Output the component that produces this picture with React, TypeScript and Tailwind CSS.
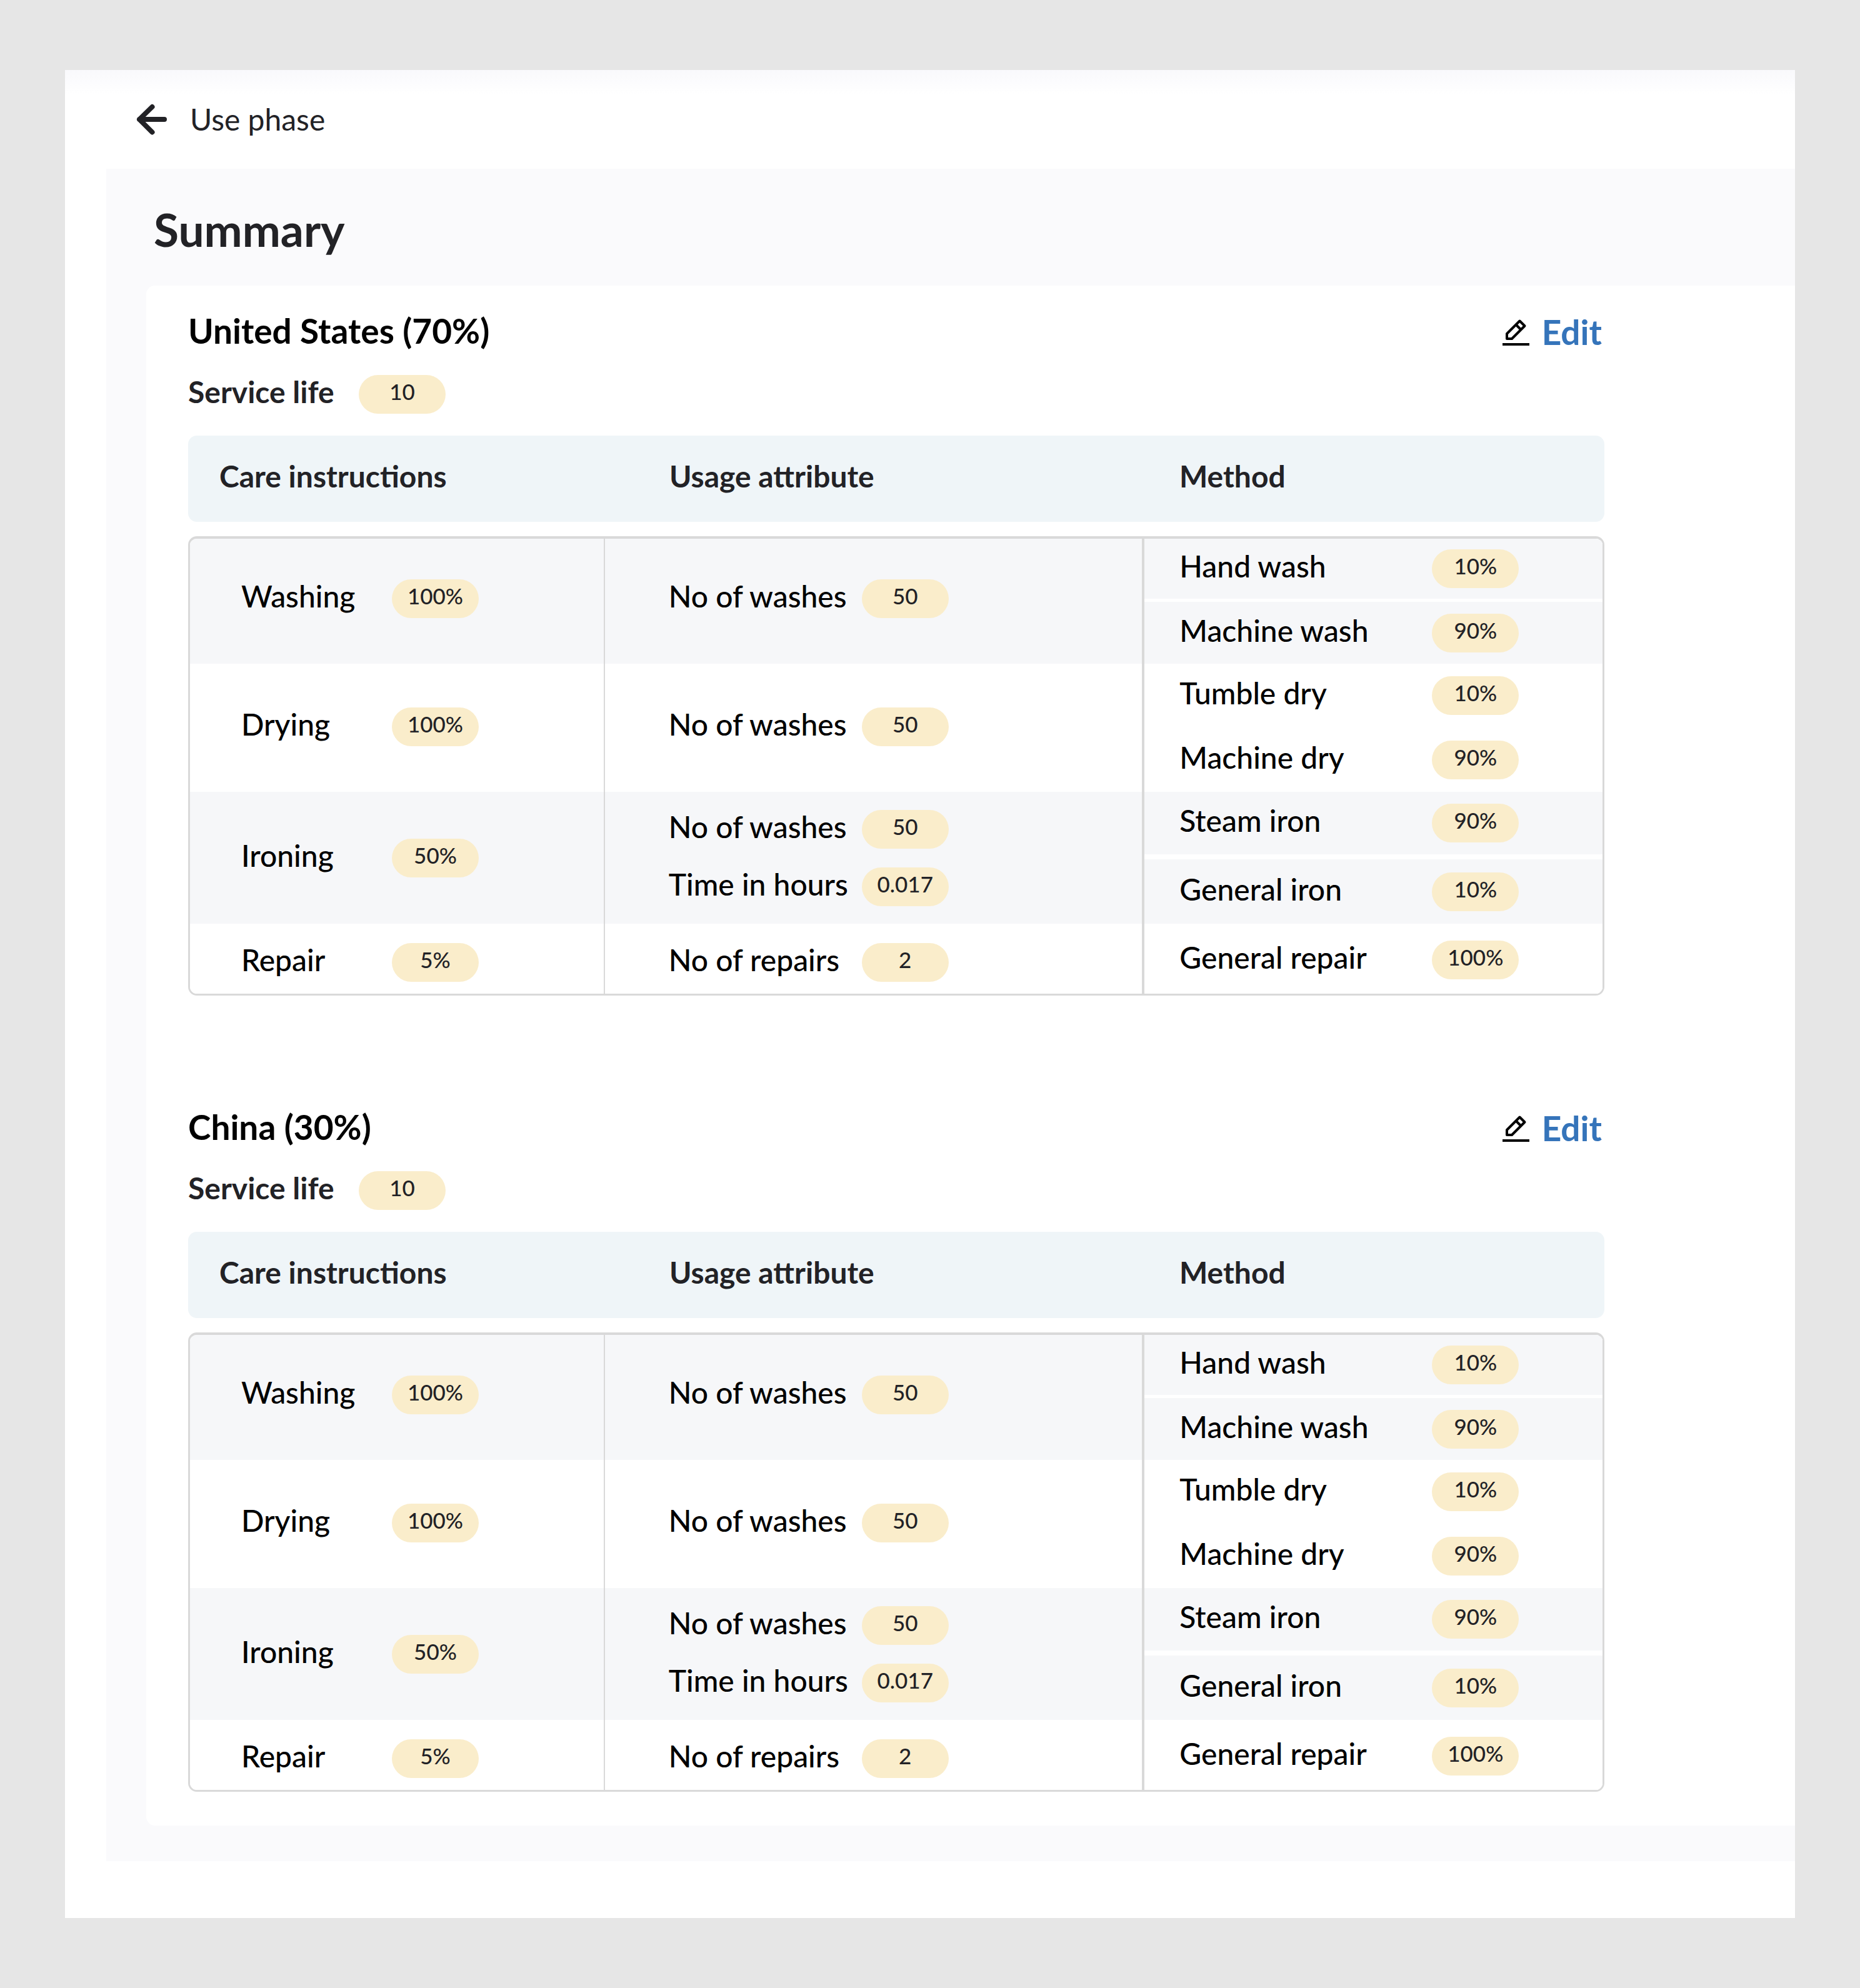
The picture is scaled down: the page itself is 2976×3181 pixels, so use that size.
type Item = { label: string; value: string };

type CareRow = {
  name: string;
  share: string;
  usage: Item[];
  methods: Item[];
  striped: boolean;
  offset: string;
  methodGrid: string;
};

const rows: CareRow[] = [
  {
    name: "Washing",
    share: "100%",
    usage: [{ label: "No of washes", value: "50" }],
    methods: [
      { label: "Hand wash", value: "10%" },
      { label: "Machine wash", value: "90%" },
    ],
    striped: true,
    offset: "pb-2",
    methodGrid: "grid-rows-[96px_99px] gap-[5px]",
  },
  {
    name: "Drying",
    share: "100%",
    usage: [{ label: "No of washes", value: "50" }],
    methods: [
      { label: "Tumble dry", value: "10%" },
      { label: "Machine dry", value: "90%" },
    ],
    striped: false,
    offset: "pb-1",
    methodGrid: "grid-rows-[102px_103px]",
  },
  {
    name: "Ironing",
    share: "50%",
    usage: [
      { label: "No of washes", value: "50" },
      { label: "Time in hours", value: "0.017" },
    ],
    methods: [
      { label: "Steam iron", value: "90%" },
      { label: "General iron", value: "10%" },
    ],
    striped: true,
    offset: "pt-0",
    methodGrid: "grid-rows-[100px_103px] gap-2",
  },
  {
    name: "Repair",
    share: "5%",
    usage: [{ label: "No of repairs", value: "2" }],
    methods: [{ label: "General repair", value: "100%" }],
    striped: false,
    offset: "pt-3",
    methodGrid: "grid-rows-[108px] pt-1",
  },
];

const countries = [
  { id: "us", title: "United States (70%)", serviceLife: "10" },
  { id: "cn", title: "China (30%)", serviceLife: "10" },
];

const Badge = ({ value }: { value: string }) => (
  <span className="flex h-[62px] w-[139px] shrink-0 items-center justify-center rounded-full bg-[#faedcb] pb-2 text-[35px] font-medium text-[#222226]">
    {value}
  </span>
);

const ArrowLeftIcon = () => (
  <svg
    width="49"
    height="50"
    viewBox="13 12 49 50"
    fill="none"
    stroke="#222226"
    strokeWidth="8"
    strokeLinecap="round"
    strokeLinejoin="round"
    aria-hidden="true"
  >
    <path d="M38.5 17 18 37l20.5 20.5M18 37h40" />
  </svg>
);

const PencilIcon = () => (
  <svg
    width="43"
    height="43"
    viewBox="16 11 43 43"
    fill="none"
    stroke="#000"
    strokeWidth="4"
    aria-hidden="true"
  >
    <path d="M43.5 14.5 51.5 22.5 31 43H23v-8z" strokeLinejoin="round" />
    <path d="M37.5 20.5l8 8M16 52h43" />
  </svg>
);

const CareTable = () => (
  <table className="mt-[35px] block w-full text-left text-[48px]">
    <thead className="block rounded-[14px] bg-[#eff5f8]">
      <tr className="grid h-[138px] grid-cols-[666fr_862fr_738fr] items-center pb-2 text-[#222226]">
        <th className="pl-[50px] font-bold">Care instructions</th>
        <th className="pl-[104px] font-bold">Usage attribute</th>
        <th className="pl-[58px] font-bold">Method</th>
      </tr>
    </thead>
    <tbody className="mt-[23px] block overflow-hidden rounded-[14px] border-[3px] border-t-4 border-[#d9d9d9] font-medium text-black">
      {rows.map((row) => (
        <tr
          key={row.name}
          className={`grid grid-cols-[664fr_864fr_733fr] ${
            row.striped ? "bg-[#f6f7f9]" : "bg-white"
          }`}
        >
          <td
            className={`flex items-center border-r-2 border-[#d9d9d9] pl-[82px] ${row.offset}`}
          >
            <span className="w-[241px] pb-2">{row.name}</span>
            <Badge value={row.share} />
          </td>
          <td
            className={`flex flex-col justify-center gap-[30px] border-r-4 border-[#d9d9d9] pl-[102px] ${row.offset}`}
          >
            {row.usage.map((item) => (
              <div key={item.label} className="flex h-[62px] items-center">
                <span className="w-[309px] pb-2">{item.label}</span>
                <Badge value={item.value} />
              </div>
            ))}
          </td>
          <td className={`grid bg-white ${row.methodGrid}`}>
            {row.methods.map((item) => (
              <div
                key={item.label}
                className={`flex items-center pl-[56px] ${
                  row.striped ? "bg-[#f6f7f9]" : "bg-white"
                }`}
              >
                <span className="w-[404px] pb-2">{item.label}</span>
                <Badge value={item.value} />
              </div>
            ))}
          </td>
        </tr>
      ))}
    </tbody>
  </table>
);

const CountrySection = ({
  title,
  serviceLife,
}: {
  title: string;
  serviceLife: string;
}) => (
  <section>
    <div className="flex h-[72px] items-center justify-between">
      <h2 className="text-[55px] font-bold text-black">{title}</h2>
      <button
        type="button"
        className="flex items-center gap-5 pt-1 pr-1 text-[55px] font-bold text-[#3574ba]"
      >
        <PencilIcon />
        Edit
      </button>
    </div>
    <div className="mt-[35px] flex h-[62px] items-center">
      <span className="w-[273px] pb-2 text-[48px] font-bold text-[#222226]">
        Service life
      </span>
      <Badge value={serviceLife} />
    </div>
    <CareTable />
  </section>
);

const App = () => {
  return (
    <div className="min-h-screen bg-[#e6e6e6] px-[104px] pt-28 pb-[111px] font-['Lato',sans-serif] leading-tight">
      <main className="bg-white pb-[91px] pl-[66px]">
        <header className="-ml-[66px] flex h-[158px] items-center bg-linear-to-b from-[#f9f9fc] to-white to-25% pl-[114px]">
          <a
            href="#"
            className="flex items-center gap-[37px] text-[48px] text-[#222226]"
          >
            <ArrowLeftIcon />
            Use phase
          </a>
        </header>
        <div className="bg-[#fafafc] pb-[57px] pl-16">
          <h1 className="flex h-[187px] items-center pt-2 pl-3 text-[73px] font-bold text-[#222226]">
            Summary
          </h1>
          <div className="flex flex-col gap-[174px] rounded-l-[14px] bg-white pt-9 pr-[305px] pb-[54px] pl-[67px]">
            {countries.map((country) => (
              <CountrySection
                key={country.id}
                title={country.title}
                serviceLife={country.serviceLife}
              />
            ))}
          </div>
        </div>
      </main>
    </div>
  );
};

export default App;
